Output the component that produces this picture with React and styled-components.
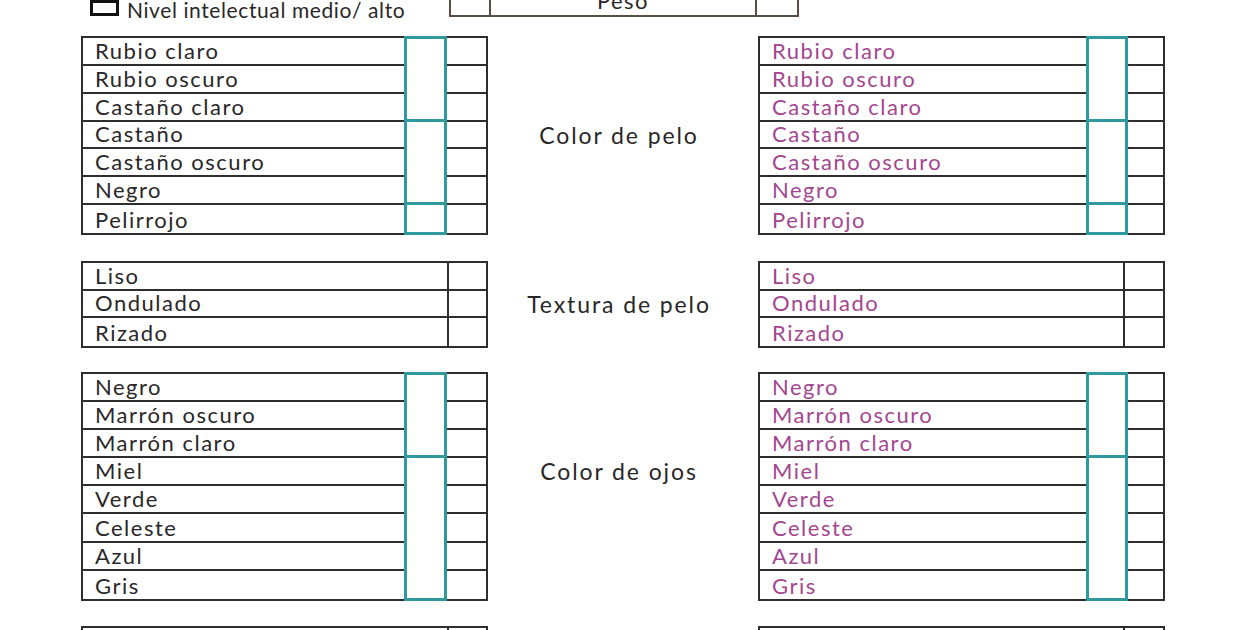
import React from "react";
import styled, { createGlobalStyle } from "styled-components";

const Global = createGlobalStyle`
  html, body { margin: 0; padding: 0; background: #fff; }
  body { width: 1240px; height: 630px; overflow: hidden; font-family: "Lato", "Liberation Sans", sans-serif; font-weight: 400; }
`;

const INK = "#2a2728";
const LINE = "#2f2d2e";
const TEAL = "#2f9a9d";
const MAGENTA = "#a4468f";

const Page = styled.div`
  padding-left: 81px;
  display: flex;
  flex-direction: column;
`;

const Header = styled.div`
  height: 36px;
  display: flex;
  align-items: flex-start;
`;

const Note = styled.div`
  width: 368px;
  display: flex;
  align-items: flex-start;
  gap: 8px;
  padding-left: 9px;
  box-sizing: border-box;
  font-size: 21px;
  letter-spacing: 0.6px;
  color: ${INK};
  line-height: 20px;
`;

const NoteBox = styled.span`
  width: 23px;
  height: 10px;
  border: 3px solid #111;
  margin-top: 0px;
  flex: none;
`;

const PesoBox = styled.div`
  width: 350px;
  height: 34px;
  margin-top: -17px;
  box-sizing: border-box;
  border: 2px solid #5a4d44;
  display: grid;
  grid-template-columns: 38px 1fr 42px;
`;

const PesoCell = styled.div`
  border-left: ${(p) => (p.$first ? "none" : "2px solid #5a4d44")};
  text-align: center;
  font-size: 22px;
  letter-spacing: 1.4px;
  color: ${INK};
  line-height: 22px;
  padding-top: 5px;
`;

const Section = styled.div`
  display: grid;
  grid-template-columns: 407px 270px 407px;
  align-items: center;
  margin-top: ${(p) => p.$gap}px;
`;

const Table = styled.div`
  width: 407px;
  box-sizing: border-box;
  border: 2px solid ${LINE};
  display: grid;
  grid-template-columns: ${(p) => p.$cols};
  grid-auto-rows: ${(p) => p.$rowH}px;
`;

const Label = styled.div`
  grid-column: 1;
  grid-row: ${(p) => p.$row};
  border-bottom: ${(p) => (p.$last ? "none" : `2px solid ${LINE}`)};
  display: flex;
  align-items: flex-end;
  padding: 0 0 1px 12px;
  font-size: 22px;
  letter-spacing: 1.5px;
  line-height: 24px;
  color: ${(p) => (p.$pink ? MAGENTA : INK)};
  white-space: nowrap;
`;

const TealGroup = styled.div`
  grid-column: 2;
  grid-row: ${(p) => p.$start} / span ${(p) => p.$span};
  border: 3px solid ${TEAL};
  border-top: ${(p) => (p.$first ? `3px solid ${TEAL}` : "none")};
  margin-top: ${(p) => (p.$first ? "-2px" : "0")};
  margin-bottom: ${(p) => (p.$lastGroup ? "-2px" : "0")};
`;

const Check = styled.div`
  grid-column: ${(p) => (p.$teal ? 3 : 2)};
  grid-row: ${(p) => p.$row};
  border-bottom: ${(p) => (p.$last ? "none" : `2px solid ${LINE}`)};
  border-left: ${(p) => (p.$teal ? "none" : `2px solid ${LINE}`)};
`;

const Caption = styled.div`
  text-align: center;
  padding-right: 8px;
  font-size: 23px;
  letter-spacing: 1.9px;
  color: ${INK};
  margin-bottom: ${(p) => p.$lift || 0}px;
`;

function Grid({ items, groups, pink, rowH, cols }) {
  const teal = !!groups;
  const n = items.length;
  let start = 1;
  return (
    <Table $cols={cols} $rowH={rowH}>
      {items.map((t, i) => (
        <Label key={"l" + i} $row={i + 1} $last={i === n - 1} $pink={pink}>
          {t}
        </Label>
      ))}
      {teal &&
        groups.map((g, gi) => {
          const s = start;
          start += g;
          return (
            <TealGroup
              key={"g" + gi}
              $start={s}
              $span={g}
              $first={gi === 0}
              $lastGroup={gi === groups.length - 1}
            />
          );
        })}
      {items.map((_, i) => (
        <Check key={"c" + i} $row={i + 1} $last={i === n - 1} $teal={teal} />
      ))}
    </Table>
  );
}

const hair = ["Rubio claro", "Rubio oscuro", "Castaño claro", "Castaño", "Castaño oscuro", "Negro", "Pelirrojo"];
const texture = ["Liso", "Ondulado", "Rizado"];
const eyes = ["Negro", "Marrón oscuro", "Marrón claro", "Miel", "Verde", "Celeste", "Azul", "Gris"];

const L_TEAL = "1fr 43px 39px";
const R_TEAL = "1fr 42px 35px";
const L_PLAIN = "1fr 39px";
const R_PLAIN = "1fr 40px";

export default function App() {
  return (
    <>
      <Global />
      <Page>
        <Header>
          <Note>
            <NoteBox />
            <span>Nivel intelectual medio/ alto</span>
          </Note>
          <PesoBox>
            <PesoCell $first />
            <PesoCell>Peso</PesoCell>
            <PesoCell />
          </PesoBox>
        </Header>

        <Section $gap={0}>
          <Grid items={hair} groups={[3, 3, 1]} rowH={27.85} cols={L_TEAL} />
          <Caption>Color de pelo</Caption>
          <Grid items={hair} groups={[3, 3, 1]} rowH={27.85} cols={R_TEAL} pink />
        </Section>

        <Section $gap={26}>
          <Grid items={texture} rowH={27.7} cols={L_PLAIN} />
          <Caption>Textura de pelo</Caption>
          <Grid items={texture} rowH={27.7} cols={R_PLAIN} pink />
        </Section>

        <Section $gap={24}>
          <Grid items={eyes} groups={[3, 5]} rowH={28.1} cols={L_TEAL} />
          <Caption $lift={30}>Color de ojos</Caption>
          <Grid items={eyes} groups={[3, 5]} rowH={28.1} cols={R_TEAL} pink />
        </Section>

        <Section $gap={25}>
          <Grid items={["", ""]} rowH={28} cols={L_PLAIN} />
          <Caption />
          <Grid items={["", ""]} rowH={28} cols={R_PLAIN} pink />
        </Section>
      </Page>
    </>
  );
}
